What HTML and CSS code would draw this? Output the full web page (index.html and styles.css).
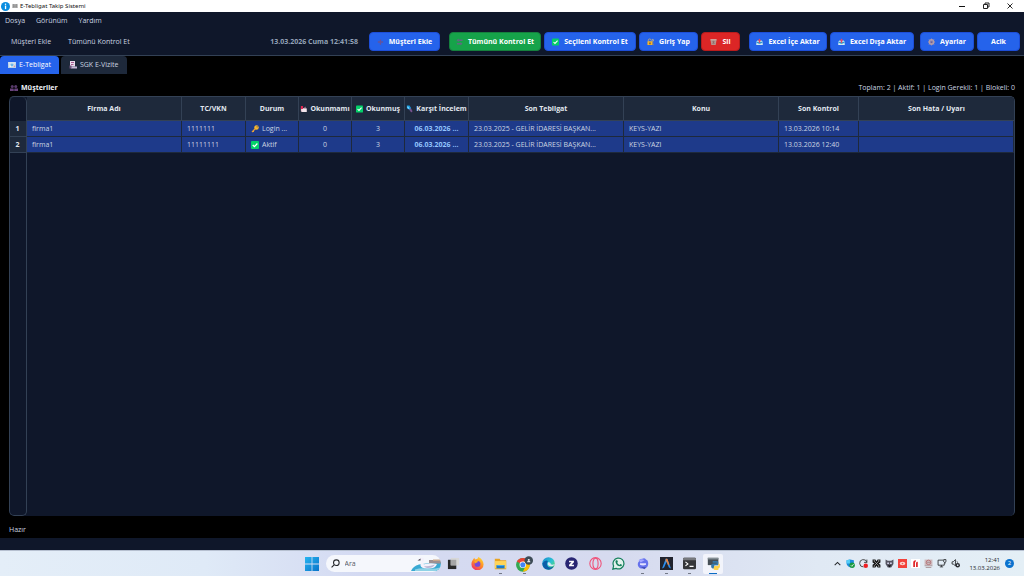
FILE: index.html
```html
<!DOCTYPE html>
<html lang="tr">
<head>
<meta charset="utf-8">
<meta name="viewport" content="width=device-width, initial-scale=1">
<title>E-Tebligat Takip Sistemi</title>
<link rel="stylesheet" href="styles.css">
</head>
<body>
<svg class="sprite" aria-hidden="true">
  <symbol id="i-info" viewBox="0 0 18 18"><circle cx="9" cy="9" r="9" fill="#0a8de0"/><circle cx="9" cy="4.6" r="1.5" fill="#fff"/><path d="M7.8 7.2h2.6v7H7.8z" fill="#fff"/></symbol>
  <symbol id="i-envelope" viewBox="0 0 16 16"><path d="M2 4h12v8H2z" fill="#bbb" stroke="#555"/><path d="M2 4l6 5 6-5M2 12l4-4M14 12l-4-4" fill="none" stroke="#444"/></symbol>
  <symbol id="i-mail" viewBox="0 0 16 16"><path d="M0 2h16v12H0z" fill="#b8cfe8"/><path d="M1 3h14v2H1z" fill="#e8eef5"/><path d="M3 6l5 4 5-4v6H3z" fill="#f5f8fc"/><circle cx="8" cy="8" r="3" fill="#6fb5e8"/><path d="M11 9h3v3h-3z" fill="#d59aa6"/></symbol>
  <symbol id="i-clinic" viewBox="0 0 16 16"><path d="M2 0h10v11H2z" fill="#eadcec"/><path d="M4 2h6v2H4zM4 6h5v2H4z" fill="#a85a90"/><path d="M4 11h12v4H4z" fill="#c8b8d8"/><path d="M1 9h4v6H1z" fill="#70557e"/></symbol>
  <symbol id="i-people" viewBox="0 0 16 14"><circle cx="4.5" cy="4" r="3" fill="#593b6b"/><circle cx="11.5" cy="4" r="3" fill="#593b6b"/><path d="M0 13V8h7v5zM9 13V8h7v5z" fill="#68427b"/><path d="M6 9h4v4H6z" fill="#4c315c"/></symbol>
  <symbol id="i-plus" viewBox="0 0 16 16"><path d="M6.500 2h3v4.500H14v3H9.500V14h-3V9.500H2v-3h4.500z" fill="#66539a"/></symbol>
  <symbol id="i-sync" viewBox="0 0 16 16"><path d="M1 4l5-4v2.500h9v3H6V8zM15 12l-5 4v-2.500H2v-3h8V8z" fill="#5f6b80"/></symbol>
  <symbol id="i-check" viewBox="0 0 16 16"><rect width="16" height="16" rx="2" fill="#04cf69"/><path d="M3.500 8l3.300 3.300 6-6.300" fill="none" stroke="#fff" stroke-width="2.400"/></symbol>
  <symbol id="i-lock" viewBox="0 0 16 16"><path d="M3 7V4q0-3 3-3t3 3" fill="none" stroke="#c7a970" stroke-width="2"/><rect x="1" y="6" width="11" height="9" rx="1" fill="#f5b62b"/><path d="M5.500 9h2.500v4H5.500z" fill="#523c26"/><circle cx="13" cy="4" r="2" fill="none" stroke="#eacb79" stroke-width="1.500"/><path d="M13 6v8h2" fill="none" stroke="#d99b2e" stroke-width="1.500"/></symbol>
  <symbol id="i-trash" viewBox="0 0 16 16"><path d="M1 2h14l-2 13H3z" fill="#b8958f"/><path d="M1 2h14v2H1z" fill="#d8c5be"/><path d="M5 5l6 7M11 5l-6 7M8 5v8" stroke="#87625f" stroke-width="1.200"/></symbol>
  <symbol id="i-export" viewBox="0 0 16 16"><path d="M1 7l3-3h8l3 3v7q0 1-1 1H2q-1 0-1-1z" fill="#a8dcec"/><path d="M2 8h12v4H2z" fill="#289bd0"/><path d="M8 0l4 5H9.500v5h-3V5H4z" fill="#e44864"/><path d="M1 11h4l1 2h4l1-2h4v4H1z" fill="#d8e9f2"/></symbol>
  <symbol id="i-gear" viewBox="0 0 16 16"><circle cx="8" cy="8" r="5" fill="none" stroke="#b49ba6" stroke-width="3.200"/><path d="M8 0v16M0 8h16M2.300 2.300l11.400 11.400M13.700 2.300L2.300 13.700" stroke="#b49ba6" stroke-width="1.700"/><circle cx="8" cy="8" r="2" fill="#725a85"/></symbol>
  <symbol id="i-mailbox" viewBox="0 0 16 16"><path d="M2 6h8l5 1v8H4l-2-2z" fill="#e8c8d4"/><path d="M5 7h10v8H5z" fill="#f2e6ed"/><path d="M2 1h5v7H2z" fill="#dc2852"/><path d="M8 6l5-4v5z" fill="#b07992"/></symbol>
  <symbol id="i-search" viewBox="0 0 16 16"><path d="M2 0h6l4 6-3 5-7-5z" fill="#159be0"/><path d="M3 2h2l3 5-2 1-3-3z" fill="#8bdcff"/><path d="M7 9l4-3 4 7-3 3z" fill="#76528e"/></symbol>
  <symbol id="i-key" viewBox="0 0 16 16"><circle cx="11" cy="5" r="4.500" fill="#f8b72c"/><path d="M8.500 7.500L2 14" stroke="#e6a038" stroke-width="2.600"/><path d="M4 12l2 2" stroke="#e6a038" stroke-width="2"/><circle cx="12.300" cy="3.700" r="1.300" fill="#584d58"/></symbol>
  <symbol id="i-win" viewBox="0 0 14 14"><defs><linearGradient id="g-win" x2="1" y2="1"><stop stop-color="#27b5f0"/><stop offset="1" stop-color="#0873c9"/></linearGradient></defs><path d="M0 0h6.600v6.600H0zM7.400 0H14v6.600H7.400zM0 7.400h6.600V14H0zM7.400 7.400H14V14H7.400z" fill="url(#g-win)"/></symbol>
  <symbol id="i-lens" viewBox="0 0 16 16"><circle cx="9.500" cy="6.500" r="5" fill="none" stroke="#26282c" stroke-width="1.900"/><path d="M6 10l-5 5" stroke="#26282c" stroke-width="2"/></symbol>
  <symbol id="i-swan" viewBox="0 0 60 28"><path d="M0 28q4-10 16-13l44-6v11q-3 6-8 8z" fill="#39a9d3"/><path d="M36 6h24v7H36z" fill="#9d8f92"/><path d="M44 5h14v3H44z" fill="#c9a78c"/><path d="M8 25q12-4 24-2t26-2q-3 5-8 7H8z" fill="#8ed2e6"/><path d="M16 5q2-4 6-4 5 1 4 6-1 3-3 6 2 2 6 1 10-3 23 0-3 9-16 9-16 1-17-6 0-4 3-8 1-3-1-4z" fill="#f4f1fa"/><path d="M26 18q10 2 22-3-5 8-16 7-4-1-6-4z" fill="#bcb8d6"/><path d="M19 3l-6 4 6 0z" fill="#494250"/></symbol>
  <symbol id="i-view" viewBox="0 0 14 14"><path d="M1 3h9v10H1z" fill="#292929"/><path d="M4 1h9v8H4z" fill="#d7d7d7"/><path d="M4 3h6v6H4z" fill="#a6a6a6"/></symbol>
  <symbol id="i-firefox" viewBox="0 0 16 16"><defs><linearGradient id="g-ff" x1=".8" y2="1" x2=".2"><stop stop-color="#ffdf32"/><stop offset=".5" stop-color="#ff8827"/><stop offset="1" stop-color="#ee2870"/></linearGradient></defs><path d="M2 4l2-3 1 2 3-1 1-2q6 3 6.500 9a7.500 7.500 0 0 1-15 0Q.500 6 2 4z" fill="url(#g-ff)"/><circle cx="8" cy="8.500" r="3.600" fill="#7848d8"/><path d="M4 5q3-1 5 1-3 0-3 2-2-1-2-3z" fill="#ffab27"/></symbol>
  <symbol id="i-folder" viewBox="0 0 16 14"><path d="M1 1h6l1 2h7v11H1z" fill="#e9a321"/><path d="M1 4h14v9H1z" fill="#ffd45a"/><path d="M3 9h10v4H3z" fill="#1978cd"/><path d="M4 9h8v1H4z" fill="#50b5ef"/></symbol>
  <symbol id="i-chrome" viewBox="0 0 20 18"><circle cx="8" cy="10" r="8" fill="#34a853"/><path d="M8 10L1 6a8 8 0 0 1 14 0z" fill="#ea4335"/><path d="M8 6h7.200a8 8 0 0 1-7.200 12l3.500-7z" fill="#fbbc05"/><circle cx="8" cy="10" r="3.800" fill="#fff"/><circle cx="8" cy="10" r="3" fill="#4285f4"/><circle cx="15" cy="5" r="5" fill="#3d4b56"/><path d="M13 7q0-2 2-2t2 2zM14 3h2v2h-2z" fill="#e2e9ed"/></symbol>
  <symbol id="i-edge" viewBox="0 0 16 16"><defs><linearGradient id="g-ed" x2="1" y2=".8"><stop stop-color="#1687d0"/><stop offset=".6" stop-color="#2bc3d2"/><stop offset="1" stop-color="#5ed66b"/></linearGradient></defs><circle cx="8" cy="8" r="7.700" fill="url(#g-ed)"/><path d="M.500 8q3-5 7-3-3 3 0 7 3 2 7-.500-3 5-8 4Q1 15 .500 8z" fill="#0b5ea9"/><path d="M8 6q-2 2-.500 4 2 2 6 1 2-1 2-2-3 1-5 0 1-2-2.500-3z" fill="#dce9f5"/></symbol>
  <symbol id="i-zed" viewBox="0 0 16 16"><circle cx="8" cy="8" r="7.700" fill="#292673"/><path d="M5 4.500h6v2L8 9.500h3v2H5v-2l3-3H5z" fill="#fff"/></symbol>
  <symbol id="i-opera" viewBox="0 0 16 16"><ellipse cx="8" cy="8" rx="7" ry="7.200" fill="none" stroke="#f05078" stroke-width="1.300"/><ellipse cx="8" cy="8" rx="3.200" ry="6.500" fill="none" stroke="#f05078" stroke-width="1.300"/></symbol>
  <symbol id="i-whatsapp" viewBox="0 0 16 16"><path d="M1 15l1-4a6.700 6.700 0 1 1 3 3z" fill="#e2f2ec" stroke="#15805c" stroke-width="1.500"/><path d="M5 4l1.500 0 .800 2-1 1q1 2 3 2.700l1-1.200 2 1q0 2-2 2-5-.500-6-5.500 0-1.500.700-2z" fill="#15805c"/></symbol>
  <symbol id="i-chat" viewBox="0 0 16 16"><path d="M3 4q0-3 4-3 3-2 5 1 3 1 3 5 0 5-4 7H5q-4-2-4-6 0-2 2-4z" fill="#6672ed"/><path d="M2 3q4-3 8 0l-5 3z" fill="#a3a5ff"/><path d="M4 7h8v2q-4 2-8 0z" fill="#e4e3ff"/><path d="M5 12h7l-2 3z" fill="#4450b8"/></symbol>
  <symbol id="i-anti" viewBox="0 0 16 16"><path d="M0 0h16v16H0z" fill="#20232d"/><path d="M2.500 14L7 2h2l4.500 12-2.500-1-3-7-3 7z" fill="#2a8ff0"/><path d="M7 2h2l2.500 7-1.500 1-2-5-1 2z" fill="#ec843a"/></symbol>
  <symbol id="i-term" viewBox="0 0 16 14"><rect width="16" height="14" rx="1.500" fill="#34363a"/><path d="M0 1.500Q0 0 1.500 0h13Q16 0 16 1.500V3H0z" fill="#77797d"/><path d="M3 5l3 2.500L3 10M8 10.500h5" fill="none" stroke="#fff" stroke-width="1.400"/></symbol>
  <symbol id="i-python" viewBox="0 0 16 16"><path d="M1 1h13v9H1z" fill="#475057"/><path d="M1 1h13v2H1z" fill="#858f95"/><path d="M7 5h5q2 0 2 2v3H9v4H7q-2 0-2-3t3-3h4V7H7z" fill="#3679aa"/><path d="M9 11h5V8q2 0 2 3t-2 3v2h-4q-2 0-2-2z" fill="#ffd34b"/></symbol>
  <symbol id="i-up" viewBox="0 0 8 8"><path d="M1.500 5.500L4 3l2.500 2.500" fill="none" stroke="#25282c" stroke-width=".9"/></symbol>
  <symbol id="i-shield" viewBox="0 0 16 16"><path d="M1 2l6-1 7 1v6q0 5-6 7-7-2-7-8z" fill="#1c8cdc"/><path d="M1 2l6-1v7H1z" fill="#54cdf7"/><circle cx="11" cy="11" r="4.800" fill="#18993f"/><path d="M8.500 11l2 2 3-4" fill="none" stroke="#fff" stroke-width="1.300"/></symbol>
  <symbol id="i-record" viewBox="0 0 16 16"><path d="M14 6A6.500 6.500 0 1 0 8 14M14 1v5H9" fill="none" stroke="#333" stroke-width="1.500"/><circle cx="12" cy="12" r="4" fill="#ef2023"/></symbol>
  <symbol id="i-knot" viewBox="0 0 16 16"><path d="M1 1h5l2 3 2-3h5v5l-3 2 3 2v5h-5l-2-3-2 3H1v-5l3-2-3-2z" fill="#191919"/><path d="M4 4l8 8M12 4l-8 8" stroke="#ccc"/><path d="M3 3h2M11 3h2M3 13h2M11 13h2" stroke="#fff"/></symbol>
  <symbol id="i-cat" viewBox="0 0 16 16"><path d="M1 1l4 2h6l4-2v8l-4 6H5L1 9z" fill="#555662"/><path d="M4 6h3v3H4zM9 6h3v3H9z" fill="#d6d5ec"/><path d="M5 11h6l-3 4z" fill="#17171c"/></symbol>
  <symbol id="i-red" viewBox="0 0 16 16"><path d="M0 0h16v16H0z" fill="#f3423b"/><ellipse cx="8" cy="8" rx="5" ry="3" fill="#fbd7d3"/><circle cx="8" cy="8" r="1.500" fill="#ef5b52"/></symbol>
  <symbol id="i-flame" viewBox="0 0 16 16"><path d="M0 0h16v16H0z" fill="#fff"/><path d="M4 14V6q0-4 5-4l-1 3q-1 0-1 3v6zM9 14V7q0-2 3-2v9z" fill="#df2024"/></symbol>
  <symbol id="i-seal" viewBox="0 0 16 16"><path d="M1 1h14v10H1z" fill="#cdbabd"/><circle cx="8" cy="6" r="4" fill="none" stroke="#b66d72" stroke-width="1.500"/><path d="M1 12h14M3 15h10M5 6h7" stroke="#a4898c" stroke-width="1.500"/></symbol>
  <symbol id="i-net" viewBox="0 0 16 16"><path d="M10 2H1v9h11V8M4 14h6M7 11v3M11 1v4q2 3 4 0V1zM13 6v3" fill="none" stroke="#27292c" stroke-width="1.500"/></symbol>
  <symbol id="i-sound" viewBox="0 0 16 16"><path d="M1 5h2l4-4v11L3 9H1z" fill="none" stroke="#27292c" stroke-width="1.500"/><circle cx="11" cy="11" r="4" fill="#292b2f"/><circle cx="11" cy="11" r="1.500" fill="#dde7f0"/><path d="M9 4q2 0 2 3" fill="none" stroke="#27292c"/></symbol>
  <symbol id="i-min" viewBox="0 0 8 8"><path d="M1 4.500h6" stroke="#111"/></symbol>
  <symbol id="i-restore" viewBox="0 0 8 8"><path d="M1.500 2.500h4v4h-4zM3 2V1h4v4H6" fill="none" stroke="#222"/></symbol>
  <symbol id="i-close" viewBox="0 0 8 8"><path d="M1.500 1.500l5 5M6.500 1.500l-5 5" stroke="#111" stroke-width=".9"/></symbol>
</svg>

<div class="app">
  <header class="titlebar">
    <svg class="icon icon-app"><use href="#i-info"/></svg>
    <svg class="icon icon-sm"><use href="#i-envelope"/></svg>
    <span class="titlebar-text">E-Tebligat Takip Sistemi</span>
    <div class="window-controls">
      <button type="button" aria-label="Simge durumuna küçült"><svg class="icon"><use href="#i-min"/></svg></button>
      <button type="button" aria-label="Geri yükle"><svg class="icon"><use href="#i-restore"/></svg></button>
      <button type="button" aria-label="Kapat"><svg class="icon"><use href="#i-close"/></svg></button>
    </div>
  </header>

  <nav class="menubar">
    <button type="button">Dosya</button>
    <button type="button">Görünüm</button>
    <button type="button">Yardım</button>
  </nav>

  <div class="toolbar">
    <button type="button" class="link">Müşteri Ekle</button>
    <button type="button" class="link">Tümünü Kontrol Et</button>
    <time class="clock">13.03.2026 Cuma 12:41:58</time>
    <div class="group">
      <button type="button" class="btn w-md"><svg class="icon"><use href="#i-plus"/></svg>Müşteri Ekle</button>
    </div>
    <div class="group">
      <button type="button" class="btn btn-green w-xl"><svg class="icon"><use href="#i-sync"/></svg>Tümünü Kontrol Et</button>
      <button type="button" class="btn w-xl"><svg class="icon"><use href="#i-check"/></svg>Seçileni Kontrol Et</button>
      <button type="button" class="btn w-sm"><svg class="icon"><use href="#i-lock"/></svg>Giriş Yap</button>
      <button type="button" class="btn btn-red w-xs"><svg class="icon"><use href="#i-trash"/></svg>Sil</button>
    </div>
    <div class="group">
      <button type="button" class="btn w-lg"><svg class="icon"><use href="#i-export"/></svg>Excel İçe Aktar</button>
      <button type="button" class="btn w-lg2"><svg class="icon"><use href="#i-export"/></svg>Excel Dışa Aktar</button>
    </div>
    <div class="group group-end">
      <button type="button" class="btn w-s2"><svg class="icon"><use href="#i-gear"/></svg>Ayarlar</button>
      <button type="button" class="btn w-xs2">Acik</button>
    </div>
  </div>

  <div class="tabs" role="tablist">
    <button type="button" role="tab" aria-selected="true" class="tab tab-active"><svg class="icon"><use href="#i-mail"/></svg>E-Tebligat</button>
    <button type="button" role="tab" aria-selected="false" class="tab"><svg class="icon"><use href="#i-clinic"/></svg>SGK E-Vizite</button>
  </div>

  <main class="content">
    <div class="section-head">
      <h1><svg class="icon"><use href="#i-people"/></svg>Müşteriler</h1>
      <p>Toplam: 2 | Aktif: 1 | Login Gerekli: 1 | Blokeli: 0</p>
    </div>
    <div class="grid-frame">
      <table class="grid">
        <colgroup>
          <col class="c-num"><col class="c-wide"><col class="c-id"><col class="c-flag"><col class="c-flag"><col class="c-flag"><col class="c-id"><col class="c-wide"><col class="c-wide"><col class="c-date"><col>
        </colgroup>
        <thead>
          <tr>
            <td class="corner"></td>
            <th scope="col">Firma Adı</th>
            <th scope="col">TC/VKN</th>
            <th scope="col">Durum</th>
            <th scope="col"><span class="cut"><svg class="icon"><use href="#i-mailbox"/></svg>Okunmamı</span></th>
            <th scope="col"><span class="cut"><svg class="icon"><use href="#i-check"/></svg>Okunmuş</span></th>
            <th scope="col"><span class="cut"><svg class="icon"><use href="#i-search"/></svg>Karşıt İncelem</span></th>
            <th scope="col">Son Tebligat</th>
            <th scope="col">Konu</th>
            <th scope="col">Son Kontrol</th>
            <th scope="col">Son Hata / Uyarı</th>
          </tr>
        </thead>
        <tbody>
          <tr>
            <th scope="row">1</th>
            <td>firma1</td>
            <td>1111111</td>
            <td><span class="state"><svg class="icon"><use href="#i-key"/></svg>Login ...</span></td>
            <td class="num">0</td>
            <td class="num">3</td>
            <td class="strong">06.03.2026 ...</td>
            <td>23.03.2025 - GELİR İDARESİ BAŞKAN...</td>
            <td>KEYS-YAZI</td>
            <td>13.03.2026 10:14</td>
            <td></td>
          </tr>
          <tr>
            <th scope="row">2</th>
            <td>firma1</td>
            <td>11111111</td>
            <td><span class="state"><svg class="icon"><use href="#i-check"/></svg>Aktif</span></td>
            <td class="num">0</td>
            <td class="num">3</td>
            <td class="strong">06.03.2026 ...</td>
            <td>23.03.2025 - GELİR İDARESİ BAŞKAN...</td>
            <td>KEYS-YAZI</td>
            <td>13.03.2026 12:40</td>
            <td></td>
          </tr>
        </tbody>
      </table>
    </div>
    <p class="status">Hazır</p>
  </main>
  <div class="statusbar"></div>
</div>

<footer class="taskbar">
  <div class="dock">
    <button type="button" class="start" aria-label="Başlat"><svg><use href="#i-win"/></svg></button>
    <label class="search">
      <svg class="search-lens"><use href="#i-lens"/></svg>
      <input type="text" placeholder="Ara" aria-label="Ara">
      <svg class="search-art"><use href="#i-swan"/></svg>
    </label>
    <div class="apps">
      <button type="button" aria-label="Görev görünümü"><svg><use href="#i-view"/></svg></button>
      <button type="button" aria-label="Firefox"><svg><use href="#i-firefox"/></svg></button>
      <button type="button" class="open" aria-label="Dosya Gezgini"><svg><use href="#i-folder"/></svg></button>
      <button type="button" class="open" aria-label="Chrome"><svg class="big"><use href="#i-chrome"/></svg></button>
      <button type="button" aria-label="Edge"><svg><use href="#i-edge"/></svg></button>
      <button type="button" aria-label="Z"><svg><use href="#i-zed"/></svg></button>
      <button type="button" aria-label="Opera"><svg><use href="#i-opera"/></svg></button>
      <button type="button" aria-label="WhatsApp"><svg><use href="#i-whatsapp"/></svg></button>
      <button type="button" class="open" aria-label="Sohbet"><svg class="small"><use href="#i-chat"/></svg></button>
      <button type="button" class="open" aria-label="Düzenleyici"><svg><use href="#i-anti"/></svg></button>
      <button type="button" class="open" aria-label="Terminal"><svg><use href="#i-term"/></svg></button>
      <button type="button" class="open current" aria-label="Python"><svg><use href="#i-python"/></svg></button>
    </div>
  </div>
  <div class="tray">
    <svg><use href="#i-up"/></svg>
    <svg><use href="#i-shield"/></svg>
    <svg><use href="#i-record"/></svg>
    <svg><use href="#i-knot"/></svg>
    <svg><use href="#i-cat"/></svg>
    <svg><use href="#i-red"/></svg>
    <svg><use href="#i-flame"/></svg>
    <svg><use href="#i-seal"/></svg>
    <svg class="tray-net"><use href="#i-net"/></svg>
    <svg class="tray-net"><use href="#i-sound"/></svg>
    <time class="tray-clock">12:41<br>13.03.2026</time>
    <span class="tray-badge">2</span>
  </div>
</footer>
</body>
</html>
```
FILE: styles.css
```css
:root {
  --navy: #0f172a;
  --slate: #1e293b;
  --line: #334155;
  --blue: #2563eb;
  --row: #1e3a8a;
}

*,
*::before,
*::after {
  box-sizing: border-box;
}

body {
  margin: 0;
  height: 100vh;
  display: flex;
  flex-direction: column;
  background: #000;
  color: #cbd5e1;
  font: 7px/10px "Open Sans", "Noto Sans", sans-serif;
}

h1,
p {
  margin: 0;
}

button {
  margin: 0;
  padding: 0;
  border: 0;
  background: none;
  color: inherit;
  font: inherit;
  white-space: nowrap;
}

.sprite {
  position: absolute;
  width: 0;
  height: 0;
}

.icon {
  width: 8px;
  height: 8px;
  flex: none;
}

.app {
  flex: 1;
  min-height: 0;
  display: flex;
  flex-direction: column;
}

/* Title bar and menus */
.titlebar {
  display: flex;
  align-items: center;
  gap: 2px;
  height: 12px;
  padding-left: 1px;
  background: #fff;
  color: #111;
  font-family: "Noto Sans", sans-serif;
  font-size: 6px;
}

.icon-app {
  width: 9px;
  height: 9px;
}

.icon-sm {
  width: 6px;
  height: 6px;
}

.window-controls {
  display: flex;
  margin-left: auto;
  padding-right: 2px;
}

.window-controls button {
  display: flex;
  justify-content: center;
  width: 24px;
}

.menubar {
  display: flex;
  gap: 11px;
  height: 16px;
  padding: 1px 5px 0;
  background: var(--navy);
}

.toolbar {
  display: flex;
  align-items: center;
  height: 28px;
  padding: 0 4px 0 11px;
  background: var(--navy);
  border-bottom: 1px solid var(--line);
}

.link {
  margin-right: 17px;
}

.clock {
  margin-left: auto;
  margin-right: 11px;
  color: #94a3b8;
  font-weight: 700;
}

.group {
  display: flex;
  gap: 3px;
  margin-right: 9px;
}

.group:nth-last-child(2) {
  margin-right: 6px;
}

.group-end {
  margin-right: 0;
}

.btn {
  display: flex;
  align-items: center;
  justify-content: center;
  gap: 5px;
  height: 19px;
  border: 1px solid #1d4ed8;
  border-radius: 4px;
  background: var(--blue);
  color: #fff;
  font-weight: 700;
}

.btn .icon,
.cut .icon {
  width: 7px;
}

.btn-green {
  background: #16a34a;
  border-color: #15803d;
}

.btn-red {
  background: #dc2626;
  border-color: #b91c1c;
}

.w-xs { width: 39px; }
.w-xs2 { width: 43px; }
.w-s2 { width: 54px; }
.w-sm { width: 59px; }
.w-md { width: 71px; }
.w-lg { width: 78px; }
.w-lg2 { width: 84px; }
.w-xl { width: 92px; }

/* Tabs */
.tabs {
  display: flex;
  gap: 2px;
}

.tab {
  display: flex;
  align-items: center;
  gap: 3px;
  height: 18px;
  padding: 0 8px;
  border-radius: 4px 4px 0 0;
  background: var(--slate);
}

.tab-active {
  background: var(--blue);
  color: #fff;
}

/* Customer grid */
.content {
  flex: 1;
  min-height: 0;
  display: flex;
  flex-direction: column;
  padding: 9px 9px 3px;
}

.section-head {
  display: flex;
  justify-content: space-between;
  padding: 0 0 3px 1px;
}

.section-head h1 {
  display: flex;
  align-items: center;
  gap: 3px;
  color: #f1f5f9;
  font-size: 7px;
  font-weight: 700;
}

.grid-frame {
  position: relative;
  flex: 1;
  overflow: hidden;
  border: 1px solid var(--line);
  border-width: 1px 1px 0 0;
  border-radius: 5px;
  background: var(--navy);
}

.grid-frame::after {
  content: "";
  position: absolute;
  inset: 0 auto 0 0;
  width: 18px;
  border: 1px solid var(--line);
  border-top: 0;
  border-radius: 5px;
}

.grid {
  width: 100%;
  table-layout: fixed;
  border-collapse: separate;
  border-spacing: 0;
}

.c-num { width: 18px; }
.c-wide { width: 155px; }
.c-id { width: 64px; }
.c-flag { width: 53px; }
.c-date { width: 80px; }

.grid th,
.grid td {
  overflow: hidden;
  padding: 0 5px;
  border: 0 solid var(--line);
  border-width: 0 1px 1px 0;
  white-space: nowrap;
}

.grid thead th {
  height: 24px;
  padding: 0 1px;
  background: var(--slate);
  color: #e2e8f0;
  font-weight: 700;
}

.grid tbody th {
  padding: 0;
  background: var(--slate);
  color: #e2e8f0;
}

.grid thead .corner {
  border-width: 0;
}

.grid tbody td {
  height: 16px;
  background: var(--row);
  border-color: var(--slate);
}

.grid th:last-child {
  border-right-width: 0;
}

.grid .num {
  text-align: center;
}

.grid .strong {
  padding: 0;
  color: #93c5fd;
  font-weight: 700;
  text-align: center;
}

.cut,
.state {
  display: flex;
  align-items: center;
  gap: 3px;
}

.cut {
  justify-content: center;
}

.status {
  padding-top: 9px;
}

.statusbar {
  height: 12px;
  background: var(--navy);
}

/* Taskbar */
.taskbar {
  display: grid;
  grid-template-columns: 1fr auto 1fr;
  align-items: center;
  height: 26px;
  border-top: 1px solid #b6c0d0;
  background: linear-gradient(90deg, #e4eef8, #dfeaf7 20%, #d4daf2 35%, #d6daef 60%, #e0e9f4 80%, #e4eff6);
  color: #23262b;
}

.dock {
  grid-column: 2;
  display: flex;
  align-items: center;
  padding-left: 4px;
}

.dock svg {
  display: block;
  width: 14px;
  height: 14px;
}

.start {
  margin-right: 7px;
}

.search {
  display: flex;
  flex: none;
  align-items: center;
  overflow: hidden;
  width: 115px;
  height: 17px;
  padding-left: 5px;
  border-radius: 9px;
  background: #f5f7fc;
}

.search input {
  flex: 1;
  min-width: 0;
  padding: 0 5px;
  border: 0;
  outline: 0;
  background: none;
  font: inherit;
}

.search input::placeholder {
  color: #555b66;
}

.search .search-lens {
  width: 9px;
  height: 9px;
}

.search .search-art {
  width: 30px;
}

.apps {
  display: flex;
  justify-content: space-between;
  width: 280px;
  margin-left: 3px;
}

.apps button {
  position: relative;
  display: flex;
  align-items: center;
  justify-content: center;
  width: 20px;
  height: 20px;
  border-radius: 2px;
}

.apps svg {
  width: 13px;
  height: 13px;
}

.apps .big {
  width: 17px;
  height: 16px;
}

.apps .small {
  width: 12px;
  height: 12px;
}

.apps .current {
  background: #f2f4fb;
}

.open::after {
  content: "";
  position: absolute;
  bottom: 0;
  width: 3px;
  height: 1px;
  background: #737987;
}

.current::after {
  width: 8px;
  background: #0b6cc4;
}

.tray {
  display: flex;
  align-items: center;
  justify-content: flex-end;
  gap: 4px;
  padding-right: 10px;
}

.tray svg {
  width: 9px;
  height: 9px;
}

.tray .tray-net {
  width: 10px;
}

.tray-clock {
  margin: 0 1px 0 4px;
  font-size: 6px;
  line-height: 8px;
  text-align: right;
}

.tray-badge {
  width: 9px;
  height: 9px;
  border-radius: 50%;
  background: #0b72ce;
  color: #fff;
  font-size: 6px;
  line-height: 9px;
  text-align: center;
}
```
